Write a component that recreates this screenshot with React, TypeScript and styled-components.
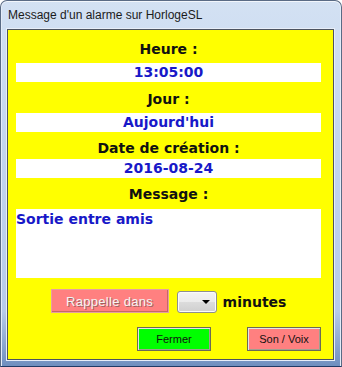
import React from "react";
import styled, { createGlobalStyle } from "styled-components";

const GlobalStyle = createGlobalStyle`
  html, body {
    margin: 0;
    padding: 0;
    background: #ffffff;
  }
`;

type Field = {
  label: string;
  value: string;
  gapAfterLabel: number;
  gapBefore: number;
};

const FIELDS: Field[] = [
  { label: "Heure :", value: "13:05:00", gapBefore: 10, gapAfterLabel: 5 },
  { label: "Jour :", value: "Aujourd'hui", gapBefore: 8, gapAfterLabel: 5 },
  { label: "Date de création :", value: "2016-08-24", gapBefore: 7, gapAfterLabel: 2 },
];

export default function App() {
  return (
    <>
      <GlobalStyle />
      <Window>
        <TitleBar>Message d'un alarme sur HorlogeSL</TitleBar>
        <Client>
          <Content>
            {FIELDS.map((f) => (
              <React.Fragment key={f.label}>
                <Label $before={f.gapBefore} $after={f.gapAfterLabel}>
                  {f.label}
                </Label>
                <ValueField>{f.value}</ValueField>
              </React.Fragment>
            ))}
            <Label $before={7} $after={6}>
              Message :
            </Label>
            <MessageBox>Sortie entre amis</MessageBox>

            <RemindRow>
              <RemindBtn disabled>Rappelle dans</RemindBtn>
              <Combo>
                <Arrow />
              </Combo>
              <Minutes>minutes</Minutes>
            </RemindRow>

            <ActionRow>
              <ActionBtn $bg="#00ff00">Fermer</ActionBtn>
              <ActionBtn $bg="#ff8080">Son / Voix</ActionBtn>
            </ActionRow>
          </Content>
        </Client>
      </Window>
    </>
  );
}

const Window = styled.div`
  width: 342px;
  height: 367px;
  box-sizing: border-box;
  display: flex;
  flex-direction: column;
  border: 1px solid #5a6b85;
  border-bottom-color: #1f3a66;
  border-radius: 7px 7px 0 0;
  background: linear-gradient(180deg, #d3e1f3 0%, #c3d5ef 40%, #b7cbea 85%, #6f8fbf 100%);
  box-shadow: inset 0 1px 0 #f2f6fc, inset 1px 0 0 #e4ecf8, inset -1px 0 0 #e4ecf8;
`;

const TitleBar = styled.div`
  height: 28px;
  padding-left: 7px;
  display: flex;
  align-items: center;
  font-family: "Liberation Sans", Arial, sans-serif;
  font-size: 12px;
  color: #1b1b1b;
`;

const Client = styled.div`
  flex: 1;
  margin: 0 7px 6px 6px;
  background: #ffff00;
  border: 1px solid #4c5360;
  box-shadow: 0 0 0 1px #e8eef8;
`;

const Content = styled.div`
  width: 305px;
  margin-left: 8px;
  display: flex;
  flex-direction: column;
  font-family: "DejaVu Sans", Verdana, sans-serif;
  font-weight: bold;
  font-size: 14px;
`;

const Label = styled.div<{ $before: number; $after: number }>`
  height: 18px;
  line-height: 18px;
  margin-top: ${(p) => p.$before}px;
  margin-bottom: ${(p) => p.$after}px;
  text-align: center;
  color: #111111;
`;

const ValueField = styled.div`
  height: 19px;
  line-height: 19px;
  background: #ffffff;
  text-align: center;
  color: #1818c8;
`;

const MessageBox = styled.div`
  height: 69px;
  background: #ffffff;
  color: #1818c8;
  line-height: 18px;
  padding-top: 1px;
  box-sizing: border-box;
`;

const RemindRow = styled.div`
  margin-top: 11px;
  display: flex;
  align-items: flex-end;
  justify-content: center;
  height: 24px;
`;

const RemindBtn = styled.button`
  width: 118px;
  height: 24px;
  margin: 0 8px 0 0;
  padding: 0;
  background: #ff8080;
  border: 1px solid #e7a0a0;
  box-shadow: inset -1px -1px 0 #c46868;
  font-family: "Liberation Sans", Arial, sans-serif;
  font-size: 13px;
  font-weight: normal;
  letter-spacing: 0.3px;
  color: #f4f4f4;
  text-shadow: 1px 1px 0 #a06060;
`;

const Combo = styled.div`
  position: relative;
  width: 40px;
  height: 22px;
  box-sizing: border-box;
  border: 1px solid #8e8f8f;
  border-radius: 3px;
  background: linear-gradient(180deg, #f3f3f3 0%, #ebebeb 50%, #dcdcdc 51%, #cfcfcf 100%);
  box-shadow: inset 0 0 0 1px #fbfbfb;
  margin-right: 6px;
`;

const Arrow = styled.span`
  position: absolute;
  right: 6px;
  top: 8px;
  width: 0;
  height: 0;
  border-left: 4px solid transparent;
  border-right: 4px solid transparent;
  border-top: 4px solid #000000;
`;

const Minutes = styled.span`
  line-height: 22px;
  height: 22px;
  color: #111111;
  font-size: 14px;
`;

const ActionRow = styled.div`
  margin-top: 14px;
  display: flex;
  justify-content: flex-end;
  gap: 36px;
`;

const ActionBtn = styled.button<{ $bg: string }>`
  width: 74px;
  height: 24px;
  padding: 0;
  background: ${(p) => p.$bg};
  border: 1px solid #6b6b55;
  box-shadow: inset 1px 1px 0 #e6e6e6, inset -1px -1px 0 #a0a090;
  font-family: "Liberation Sans", Arial, sans-serif;
  font-size: 11px;
  font-weight: normal;
  color: #111111;
`;
